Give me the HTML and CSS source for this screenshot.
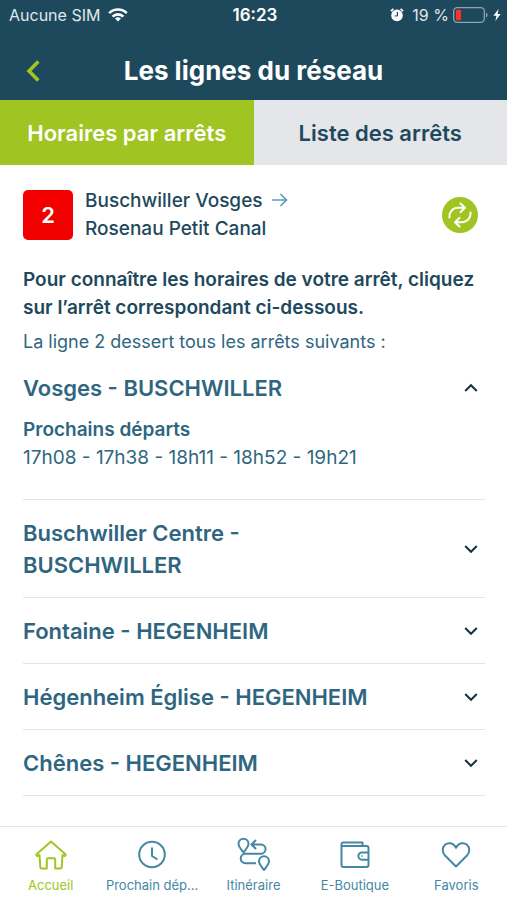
FILE: index.html
```html
<!DOCTYPE html>
<html lang="fr">

<head>
    <meta charset="UTF-8">
    <meta name="viewport" content="width=device-width, initial-scale=1.0">
    <title>Les lignes du réseau</title>
    <link rel="stylesheet" href="styles.css">
</head>

<body>
    <header class="header">
        <div class="status-bar">
            <div class="status-left">
                <span>Aucune SIM</span>
                <svg width="20" height="14" viewBox="0 0 20 14" fill="none" stroke="#fff" stroke-width="2.6">
                    <path d="M1.2 5.2a12.4 12.4 0 0 1 17.6 0" />
                    <path d="M4.6 8.6a7.6 7.6 0 0 1 10.8 0" />
                    <path d="M10 13.6l-3-3a4.3 4.3 0 0 1 6 0z" fill="#fff" stroke="none" />
                </svg>
            </div>
            <span class="status-time">16:23</span>
            <div class="status-right">
                <svg class="alarm" width="14" height="14" viewBox="0 0 14 14">
                    <circle cx="7" cy="7.4" r="5.8" fill="#fff" />
                    <path d="M.8 3.2L3.4.9M13.2 3.2L10.6.9" stroke="#fff" stroke-width="1.6" />
                    <path d="M7.4 4v3.8L4.6 8" fill="none" stroke="#1e495c" stroke-width="1.2" />
                </svg>
                <span>19 %</span>
                <svg width="36" height="16" viewBox="0 0 36 16">
                    <rect x=".7" y=".7" width="30.6" height="14.6" rx="3.5" fill="none" stroke="#8fa4ae" stroke-width="1.3" />
                    <rect x="3" y="2.8" width="5" height="10.4" rx="1" fill="#ff3126" />
                    <path d="M33 5.5c2 .8 2 4.2 0 5z" fill="#8fa4ae" />
                </svg>
                <svg width="8" height="12" viewBox="0 0 8 12">
                    <path d="M5.6 0L.4 6.8h3L2.4 12l5.2-7h-3z" fill="#fff" />
                </svg>
            </div>
        </div>
        <div class="title-bar">
            <button type="button" class="back" aria-label="Retour">
                <svg width="14" height="22" viewBox="0 0 14 22" fill="none" stroke="#a0c522" stroke-width="3.6">
                    <path d="M12.3 1.5L3 11l9.3 9.5" />
                </svg>
            </button>
            <h1>Les lignes du réseau</h1>
        </div>
    </header>

    <div class="tabs" role="tablist">
        <button type="button" class="tab active" role="tab" aria-selected="true">Horaires par arrêts</button>
        <button type="button" class="tab" role="tab" aria-selected="false">Liste des arrêts</button>
    </div>

    <main class="content">
        <div class="line">
            <span class="line-number">2</span>
            <p class="line-name">
                Buschwiller Vosges
                <svg class="arrow" width="16" height="14" viewBox="0 0 16 14" fill="none" stroke="#5b9dc0" stroke-width="1.7">
                    <path d="M0 7h14M8.5 1l6 6-6 6" />
                </svg><br>
                Rosenau Petit Canal
            </p>
            <button type="button" class="swap" aria-label="Inverser le sens">
                <svg width="24" height="26" viewBox="0 0 24 26" fill="none" stroke="#fff" stroke-width="2" stroke-linecap="round" stroke-linejoin="round">
                    <path d="M1.5 15.5C.8 10 5 5.8 10 5.8h6.5M12.5 1.5l4.5 4.3-4.5 4.3" />
                    <path d="M22.5 10.5c.7 5.5-3.5 9.7-8.5 9.7H7.5M11.5 15.9L7 20.2l4.5 4.3" />
                </svg>
            </button>
        </div>

        <p class="intro">Pour connaître les horaires de votre arrêt, cliquez sur l’arrêt correspondant ci-dessous.</p>
        <p class="info">La ligne 2 dessert tous les arrêts suivants :</p>

        <ul class="stops">
            <li class="stop open">
                <button type="button" class="stop-btn" aria-expanded="true">
                    <span class="stop-name">Vosges - BUSCHWILLER</span>
                    <svg class="chevron" width="14" height="10" viewBox="0 0 14 10"><path d="M1.2 8L7 2.2 12.8 8" /></svg>
                </button>
                <div class="departures">
                    <h2>Prochains départs</h2>
                    <p>17h08 - 17h38 - 18h11 - 18h52 - 19h21</p>
                </div>
            </li>
            <li class="stop">
                <button type="button" class="stop-btn" aria-expanded="false">
                    <span class="stop-name">Buschwiller Centre - BUSCHWILLER</span>
                    <svg class="chevron" width="14" height="10" viewBox="0 0 14 10"><path d="M1.2 2L7 7.8 12.8 2" /></svg>
                </button>
            </li>
            <li class="stop">
                <button type="button" class="stop-btn" aria-expanded="false">
                    <span class="stop-name">Fontaine - HEGENHEIM</span>
                    <svg class="chevron" width="14" height="10" viewBox="0 0 14 10"><path d="M1.2 2L7 7.8 12.8 2" /></svg>
                </button>
            </li>
            <li class="stop">
                <button type="button" class="stop-btn" aria-expanded="false">
                    <span class="stop-name">Hégenheim Église - HEGENHEIM</span>
                    <svg class="chevron" width="14" height="10" viewBox="0 0 14 10"><path d="M1.2 2L7 7.8 12.8 2" /></svg>
                </button>
            </li>
            <li class="stop">
                <button type="button" class="stop-btn" aria-expanded="false">
                    <span class="stop-name">Chênes - HEGENHEIM</span>
                    <svg class="chevron" width="14" height="10" viewBox="0 0 14 10"><path d="M1.2 2L7 7.8 12.8 2" /></svg>
                </button>
            </li>
        </ul>
    </main>

    <nav class="nav">
        <a href="#accueil" class="nav-item active">
            <svg width="34" height="34" viewBox="0 0 34 34">
                <path d="M17 4.5L2.5 17.2c-.6.7.3 2.3 1.6 1.4L5.5 18l.8 12.2c.1.9.5 1.3 1.3 1.3h5.2v-9c0-.8.4-1.2 1.2-1.2h6c.8 0 1.2.4 1.2 1.2v9h5.2c.8 0 1.2-.4 1.3-1.3L28.5 18l1.4.6c1.3.9 2.2-.7 1.6-1.4z" />
            </svg>
            <span>Accueil</span>
        </a>
        <a href="#prochain-depart" class="nav-item">
            <svg width="34" height="34" viewBox="0 0 34 34">
                <circle cx="17" cy="17.5" r="12.8" />
                <path d="M17 10.5V19l5.5 3.5" />
            </svg>
            <span>Prochain dép...</span>
        </a>
        <a href="#itineraire" class="nav-item">
            <svg width="34" height="34" viewBox="0 0 34 34">
                <path d="M7.5 15.5c-2-3-5-5.5-5-8.7a5 5 0 0 1 10 0c0 3.2-3 5.7-5 8.7z" />
                <path d="M28 33c-2-3-5-5.5-5-8.7a5 5 0 0 1 10 0c0 3.2-3 5.7-5 8.7z" />
                <path d="M20 3l-4.5 4.5L20 12M16 7.5h9a4.6 4.6 0 0 1 0 9.2H9.5a4.8 4.8 0 0 0 0 9.6H20" />
            </svg>
            <span>Itinéraire</span>
        </a>
        <a href="#e-boutique" class="nav-item">
            <svg width="34" height="34" viewBox="0 0 34 34">
                <path d="M24.5 9V5.5h-19a2 2 0 0 0-2 2V28a2 2 0 0 0 2 2h23a2 2 0 0 0 2-2V11a2 2 0 0 0-2-2H4" />
                <path d="M30.5 15.5H24a3.6 3.6 0 0 0 0 7.2h6.5M23.5 19.1h1" />
            </svg>
            <span>E-Boutique</span>
        </a>
        <a href="#favoris" class="nav-item">
            <svg width="34" height="34" viewBox="0 0 34 34">
                <path d="M17 29.5l-11-11C3 15.5 3 10.5 6 7.8c3-2.7 8.5-2.3 11 3 2.5-5.3 8-5.7 11-3 3 2.7 3 7.7 0 10.7z" />
            </svg>
            <span>Favoris</span>
        </a>
    </nav>
</body>

</html>
```
FILE: styles.css
```css
:root {
    --header-bg: #1e495c;
    --green: #a0c522;
    --tab-bg: #e5e6ea;
    --dark: #1e495c;
    --blue: #2f667f;
    --light-blue: #4487a5;
    --border-color: #dde8ec;
    --font-family: Inter, "Liberation Sans", sans-serif;
}

* {
    box-sizing: border-box;
}

body {
    font-family: var(--font-family);
    font-size: 19px;
    line-height: 28px;
    background-color: #fff;
    color: var(--blue);
    display: flex;
    flex-direction: column;
    min-height: 100vh;
    margin: 0;
}

h1,
h2,
p,
ul {
    margin: 0;
    padding: 0;
}

button {
    font-family: inherit;
    color: inherit;
    background: none;
    border: none;
    padding: 0;
    cursor: pointer;
}

svg {
    flex: none;
}

/* En-tête */
.header {
    background-color: var(--header-bg);
    color: #fff;
}

.status-bar {
    display: grid;
    grid-template-columns: 1fr auto 1fr;
    align-items: center;
    height: 30px;
    padding: 0 6px 0 9px;
    font-size: 16px;
}

.status-left,
.status-right {
    display: flex;
    align-items: center;
    gap: 8px;
    color: #e0e7ea;
}

.status-right {
    justify-content: flex-end;
    gap: 4px;
}

.alarm {
    margin-right: 4px;
}

.status-time {
    font-size: 17px;
    font-weight: 600;
}

.title-bar {
    display: grid;
    grid-template-columns: 40px 1fr 40px;
    align-items: center;
    height: 70px;
    padding: 12px 26px 0;
}

.back {
    display: flex;
    align-items: center;
    height: 40px;
}

.title-bar h1 {
    font-size: 26px;
    font-weight: 700;
    line-height: 32px;
    text-align: center;
}

/* Onglets */
.tabs {
    display: flex;
}

.tab {
    flex: 1;
    height: 65px;
    font-size: 22px;
    font-weight: 600;
    background-color: var(--tab-bg);
    color: var(--dark);
}

.tab.active {
    background-color: var(--green);
    color: #fff;
}

/* Contenu */
.content {
    padding: 22px 22px 24px 23px;
}

.line {
    display: flex;
    align-items: center;
    gap: 12px;
    margin-bottom: 23px;
    padding-right: 7px;
}

.line-number {
    width: 50px;
    height: 50px;
    border-radius: 5px;
    background-color: #f20000;
    color: #fff;
    font-size: 22px;
    font-weight: 600;
    line-height: 50px;
    text-align: center;
}

.line-name {
    flex: 1;
    color: var(--dark);
    font-weight: 500;
}

.arrow {
    margin-left: 4px;
}

.swap {
    display: flex;
    align-items: center;
    justify-content: center;
    width: 36px;
    height: 36px;
    border-radius: 50%;
    background-color: var(--green);
}

.intro {
    color: var(--dark);
    font-weight: 600;
}

.info {
    margin-top: 6px;
    font-size: 18px;
}

/* Liste des arrêts */
.stops {
    list-style: none;
}

.stop {
    border-bottom: 1px solid var(--border-color);
}

.stop-btn {
    display: flex;
    align-items: center;
    justify-content: space-between;
    width: 100%;
    padding: 17px 7px 16px 0;
    text-align: left;
}

.stop-name {
    max-width: 360px;
    font-size: 22px;
    font-weight: 600;
    line-height: 32px;
}

.chevron {
    fill: none;
    stroke: #12353f;
    stroke-width: 2;
}

.stop.open .stop-btn {
    padding-top: 16px;
    padding-bottom: 12px;
}

.departures {
    padding-bottom: 27px;
}

.departures h2 {
    font-size: 19px;
    font-weight: 600;
    line-height: 28px;
}

/* Navigation */
.nav {
    position: sticky;
    bottom: 0;
    display: grid;
    grid-template-columns: repeat(5, 1fr);
    margin-top: auto;
    padding: 10px 0 5px;
    border-top: 1px solid #e2e5e7;
    background-color: #fff;
}

.nav-item {
    display: flex;
    flex-direction: column;
    align-items: center;
    gap: 4px;
    font-size: 13px;
    line-height: 20px;
    color: var(--light-blue);
    text-decoration: none;
}

.nav-item.active {
    color: var(--green);
}

.nav-item svg {
    fill: none;
    stroke: currentColor;
    stroke-width: 2;
    stroke-linejoin: round;
}
```
